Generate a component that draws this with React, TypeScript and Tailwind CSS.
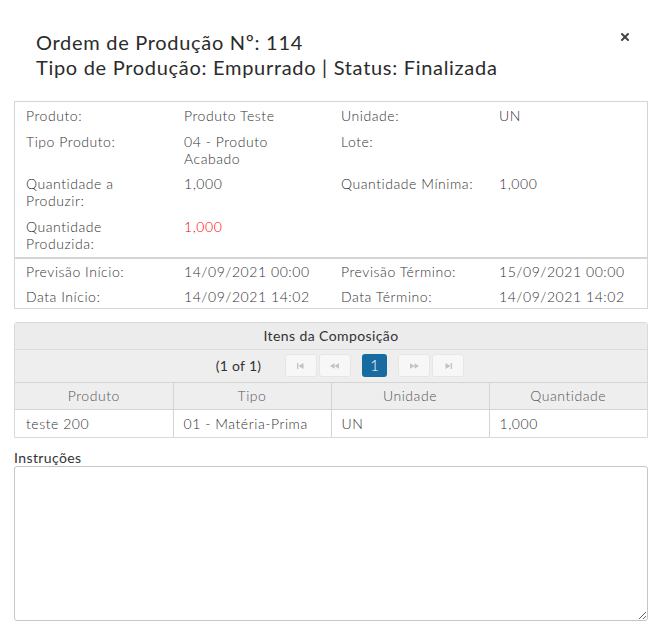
import { X } from "lucide-react";

const font = { fontFamily: "Lato, 'Noto Sans', sans-serif" };

function PagerIcon({ kind }: { kind: "first" | "prev" | "next" | "last" }) {
  return (
    <svg width="12" height="8" viewBox="0 0 12 8" fill="#c2c2c2">
      {kind === "first" && (
        <>
          <rect x="2" y="1" width="1.3" height="6" />
          <path d="M3.5 4 L8.5 1 L8.5 7 Z" />
        </>
      )}
      {kind === "prev" && (
        <>
          <path d="M1 4 L5.5 1.2 L5.5 6.8 Z" />
          <path d="M5.5 4 L10 1.2 L10 6.8 Z" />
        </>
      )}
      {kind === "next" && (
        <>
          <path d="M2 1.2 L6.5 4 L2 6.8 Z" />
          <path d="M6.5 1.2 L11 4 L6.5 6.8 Z" />
        </>
      )}
      {kind === "last" && (
        <>
          <path d="M3.5 1 L8.5 4 L3.5 7 Z" />
          <rect x="8.7" y="1" width="1.3" height="6" />
        </>
      )}
    </svg>
  );
}

function PagerBtn({ kind }: { kind: "first" | "prev" | "next" | "last" }) {
  return (
    <div className="w-[32px] h-[23px] rounded-[3px] border border-[#e6e6e6] bg-[#f7f7f7] flex items-center justify-center">
      <PagerIcon kind={kind} />
    </div>
  );
}

export default function App() {
  return (
    <div className="w-[662px] h-[632px] bg-white text-[#333] relative" style={font}>
      {/* Header */}
      <div className="pt-[30px] pl-[36px] pr-[31px] pb-[21px] flex justify-between">
        <h1 className="text-[20px] leading-[25px] font-normal tracking-[0.7px] text-[#2b2b2b]">
          Ordem de Produção Nº: 114
          <br />
          Tipo de Produção: Empurrado | Status: Finalizada
        </h1>
        <X size={12} strokeWidth={4} className="mt-[1px] text-[#444]" />
      </div>

      <div className="px-[14px]">
        {/* Details */}
        <div className="border border-[#d5d5d5] text-[14px] font-light tracking-[0.55px]">
          <div className="grid grid-cols-[158px_157px_158px_1fr] gap-y-[8.5px] px-[11px] pt-[5px] pb-[5px] leading-[17px]">
            <div>Produto:</div>
            <div>Produto Teste</div>
            <div>Unidade:</div>
            <div>UN</div>
            <div>Tipo Produto:</div>
            <div className="pr-[40px]">04 - Produto Acabado</div>
            <div>Lote:</div>
            <div></div>
            <div className="pr-[40px]">Quantidade a Produzir:</div>
            <div>1,000</div>
            <div>Quantidade Mínima:</div>
            <div>1,000</div>
            <div className="pr-[60px]">Quantidade Produzida:</div>
            <div className="text-[#ff0000]">1,000</div>
            <div></div>
            <div></div>
          </div>
          <div className="border-t-2 border-[#d5d5d5] grid grid-cols-[158px_157px_158px_1fr] gap-y-[8px] px-[11px] pt-[4px] pb-[3px] leading-[17px]">
            <div>Previsão Início:</div>
            <div>14/09/2021 00:00</div>
            <div>Previsão Término:</div>
            <div>15/09/2021 00:00</div>
            <div>Data Início:</div>
            <div>14/09/2021 14:02</div>
            <div>Data Término:</div>
            <div>14/09/2021 14:02</div>
          </div>
        </div>

        {/* Composition */}
        <div className="mt-[13px] border border-[#d9d9d9] rounded-t-[3px]">
          <div className="h-[27px] bg-[#ececec] flex items-center justify-center text-[14px] font-normal tracking-[0.4px] text-[#333] border-b border-[#dcdcdc]">
            Itens da Composição
          </div>
          <div className="h-[33px] bg-[#eeeeee] flex items-center justify-center pl-[18px] text-[14px] font-normal tracking-[0.3px] border-b border-[#d4d4d4]">
            <span className="mr-[24px]">(1 of 1)</span>
            <div className="flex gap-[2px]">
              <PagerBtn kind="first" />
              <PagerBtn kind="prev" />
            </div>
            <div className="w-[25px] h-[23px] mx-[11px] rounded-[3px] bg-[#186ba0] text-white text-[15px] font-light flex items-center justify-center">
              1
            </div>
            <div className="flex gap-[2px]">
              <PagerBtn kind="next" />
              <PagerBtn kind="last" />
            </div>
          </div>
          <table className="w-full text-[14px] font-light tracking-[0.55px] border-collapse table-fixed">
            <thead>
              <tr className="h-[27px] bg-[#eeeeee] text-[#555]">
                <th className="font-light border-r border-[#d4d4d4]">Produto</th>
                <th className="font-light border-r border-[#d4d4d4]">Tipo</th>
                <th className="font-light border-r border-[#d4d4d4]">Unidade</th>
                <th className="font-light">Quantidade</th>
              </tr>
            </thead>
            <tbody>
              <tr className="h-[27px] border-t border-[#d4d4d4]">
                <td className="px-[11px] border-r border-[#d4d4d4]">teste 200</td>
                <td className="px-[10px] border-r border-[#d4d4d4]">01 - Matéria-Prima</td>
                <td className="px-[10px] border-r border-[#d4d4d4]">UN</td>
                <td className="px-[10px]">1,000</td>
              </tr>
            </tbody>
          </table>
        </div>

        {/* Instructions */}
        <div className="mt-[11px] text-[14px] font-normal tracking-[0.4px] leading-[17px]">Instruções</div>
        <textarea
          className="block w-full h-[155px] border border-[#c6c6c6] rounded-[3px] resize-y outline-none"
          readOnly
        />
      </div>
    </div>
  );
}
